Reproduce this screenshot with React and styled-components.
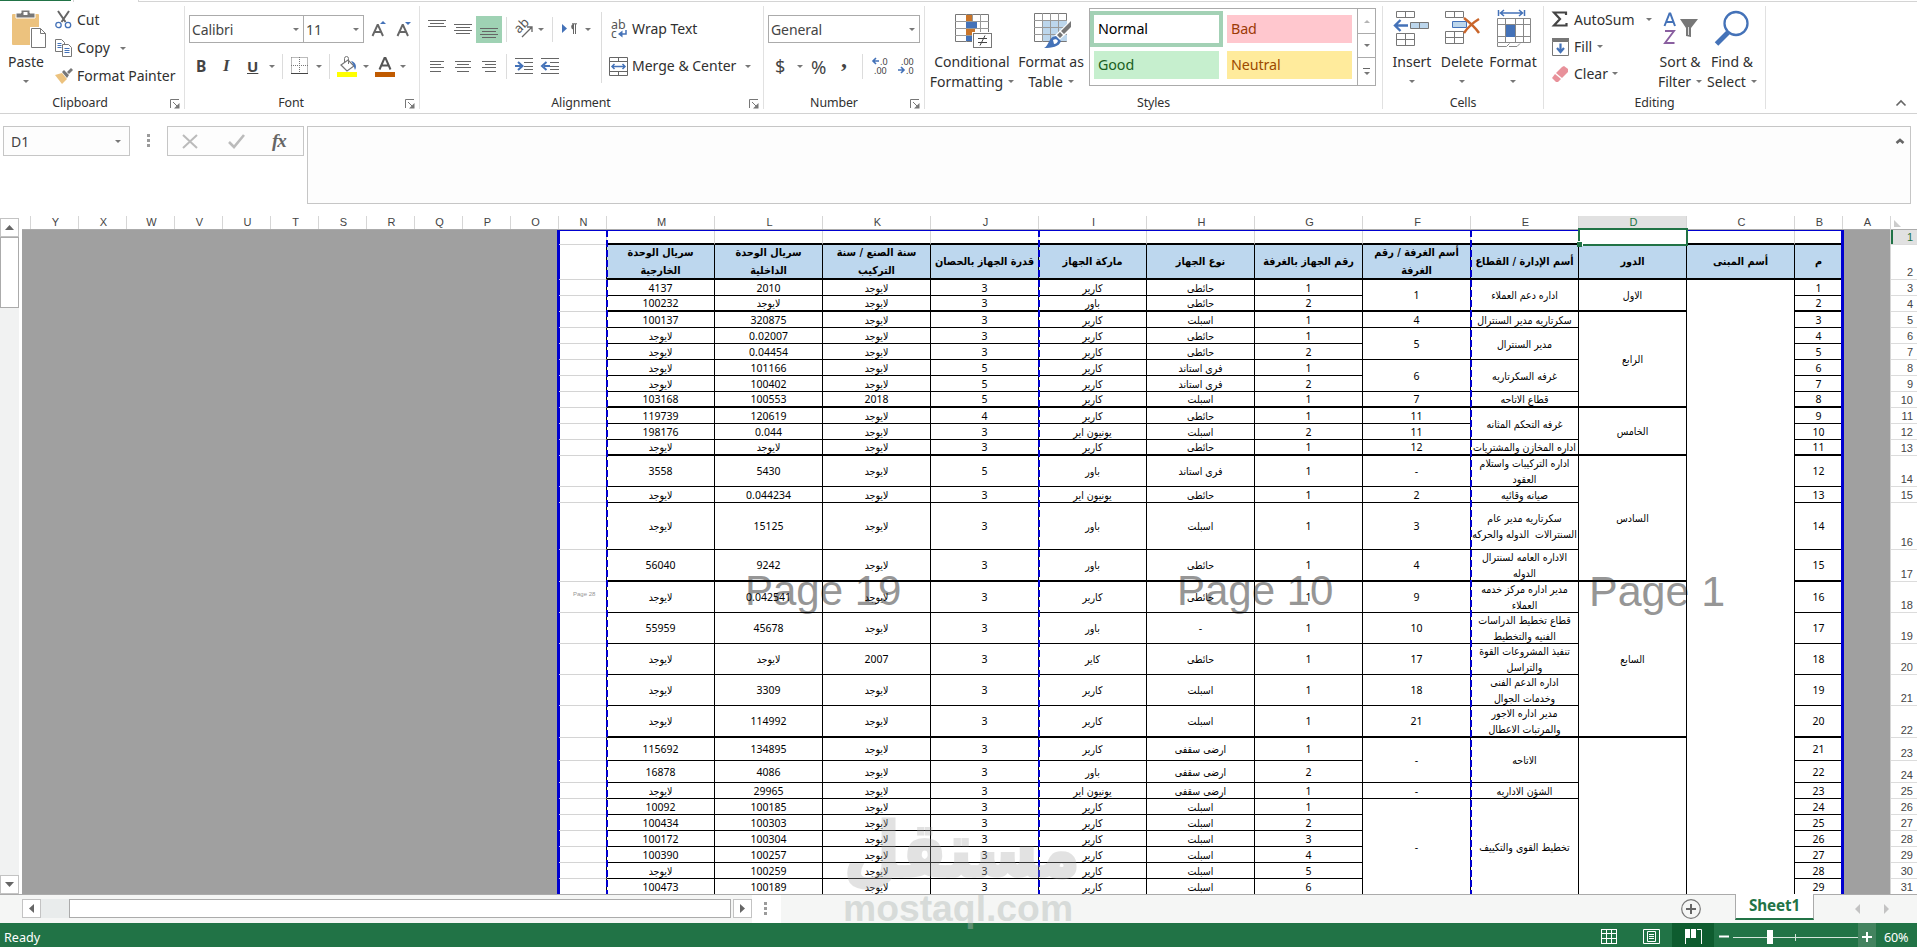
import React from "react";
import styled, { createGlobalStyle, css } from "styled-components";

const GlobalStyle = createGlobalStyle`
  html, body { margin: 0; padding: 0; overflow: hidden; background: #fff; }
  *, *::before, *::after { box-sizing: border-box; }
`;

const UI = `"Noto Sans", "Open Sans", sans-serif`;
const ARABIC = `"DejaVu Sans Condensed", "DejaVu Sans", sans-serif`;
const GREEN = "#217346";
const GRAY = "#777";
const BLUE = "#4472b8";

const Window = styled.div`
  width: 1917px;
  height: 947px;
  display: flex;
  flex-direction: column;
  background: #fff;
  color: #303030;
  font-family: ${UI};
  overflow: hidden;
  & > * { flex: none; }
`;

/* ---------- ribbon ---------- */
const TabEdge = styled.div`
  height: 2px;
  display: flex;
  & > i:nth-child(1) { width: 71px; background: ${GREEN}; height: 1px; }
  & > i:nth-child(2) { width: 3px; border-right: 1px solid #d4d4d4; }
  & > i:nth-child(3) { width: 64px; }
  & > i:nth-child(4) { flex: 1; border-bottom: 1px solid #d4d4d4; border-left: 1px solid #d4d4d4; }
`;
const Ribbon = styled.div`
  height: 112px;
  display: flex;
  border-bottom: 1px solid #d2d2d2;
  padding-top: 4px;
`;
const Group = styled.section`
  width: ${(p) => p.$w}px;
  height: 103px;
  display: flex;
  flex-direction: column;
  border-right: 1px solid #e1e1e1;
`;
const GroupBody = styled.div`
  height: 87px;
  flex: none;
  display: flex;
`;
const GroupFoot = styled.div`
  height: 16px;
  flex: none;
  display: flex;
  justify-content: center;
  position: relative;
  font-size: 12.4px;
  line-height: 20px;
  padding-right: ${(p) => p.$pr || 0}px;
  letter-spacing: -0.1px;
  & > svg { position: absolute; right: 4px; top: 6px; }
`;
const Col = styled.div`
  width: ${(p) => (p.$w ? p.$w + "px" : "auto")};
  flex: none;
  display: flex;
  flex-direction: column;
  margin-left: ${(p) => p.$ml || 0}px;
  padding-top: ${(p) => p.$pt || 0}px;
`;
const Row = styled.div`
  height: ${(p) => p.$h}px;
  display: flex;
  align-items: center;
  flex: none;
  margin-top: ${(p) => p.$mt || 0}px;
`;
const Slot = styled.span`
  width: ${(p) => p.$w}px;
  margin-left: ${(p) => p.$ml || 0}px;
  margin-top: ${(p) => p.$mt || 0}px;
  flex: none;
  display: flex;
  align-items: center;
`;
const Label = styled.span`
  font-size: 14px;
  line-height: 20px;
  margin-left: ${(p) => p.$ml || 0}px;
  white-space: nowrap;
`;
const Caret = styled.i`
  flex: none;
  margin-left: ${(p) => p.$ml || 0}px;
  margin-top: ${(p) => p.$mt || 0}px;
  border: 3.5px solid transparent;
  border-top-color: #777;
  border-bottom: 0;
`;
const VLine = styled.i`
  width: 1px;
  height: ${(p) => p.$h || 25}px;
  margin-left: ${(p) => p.$ml || 0}px;
  margin-top: ${(p) => p.$mt || 0}px;
  background: #dcdcdc;
  flex: none;
`;
const Combo = styled.div`
  width: ${(p) => p.$w}px;
  height: 28px;
  border: 1px solid #ababab;
  border-left-width: ${(p) => (p.$joined ? 0 : 1)}px;
  margin-left: ${(p) => p.$ml || 0}px;
  display: flex;
  align-items: center;
  justify-content: space-between;
  padding: 0 4px 0 2px;
  font-size: 14px;
  color: #444;
  letter-spacing: -0.1px;
`;
const Letter = styled.b`
  font: ${(p) => p.$font};
  color: #444;
  text-decoration: ${(p) => (p.$u ? "underline" : "none")};
`;
const Gallery = styled.div`
  width: 287px;
  height: 78px;
  margin-left: 2px;
  margin-top: 2px;
  border: 1px solid #ababab;
  display: flex;
`;
const Swatches = styled.div`
  display: grid;
  grid-template-columns: 133px 125px;
  grid-template-rows: 36px 28px;
  gap: 4px;
  padding-top: 2px;
  width: 267px;
`;
const Swatch = styled.div`
  height: ${(p) => (p.$sel ? 36 : 28)}px;
  margin: ${(p) => (p.$sel ? "0" : p.$m)};
  border: ${(p) => (p.$sel ? "4px solid #a3d1b5" : "0")};
  background: ${(p) => p.$bg};
  color: ${(p) => p.$c};
  font-size: 14.3px;
  line-height: 27px;
  padding-left: 4px;
  letter-spacing: -0.1px;
`;
const GalleryBar = styled.div`
  flex: 1;
  border-left: 1px solid #ababab;
  display: grid;
  grid-template-rows: 25px 24px 1fr;
  & > span { display: flex; flex-direction: column; align-items: center; justify-content: center; border-bottom: 1px solid #ababab; }
  & > span:last-child { border-bottom: 0; }
`;
const MoreBar = styled.i`
  width: 7px;
  height: 1px;
  background: #666;
  margin-bottom: 3px;
`;
const BigIcon = styled.div`
  height: 45px;
  display: flex;
  align-items: flex-start;
  justify-content: center;
  padding: ${(p) => p.$p || "0"};
`;
const BigText = styled.div`
  height: 20px;
  display: flex;
  align-items: center;
  justify-content: center;
  font-size: 14px;
  white-space: nowrap;
`;
const Collapse = styled.div`
  flex: 1;
  display: flex;
  align-items: flex-end;
  justify-content: flex-end;
  padding: 0 10px 6px 0;
`;

/* ---------- formula bar ---------- */
const FormulaBar = styled.div`
  height: 102px;
  display: flex;
  padding-top: 12px;
  align-items: flex-start;
`;
const NameBox = styled.div`
  width: 127px;
  height: 30px;
  margin-left: 3px;
  border: 1px solid #c6c6c6;
  background: #fdfdfd;
  display: flex;
  align-items: center;
  justify-content: space-between;
  padding: 0 8px 0 7px;
  font-size: 14px;
  color: #444;
`;
const Dots = styled.div`
  display: flex;
  flex-direction: column;
  gap: 2px;
  margin: ${(p) => p.$m};
  & > i { width: 3px; height: 3px; background: #9b9b9b; }
`;
const FxBox = styled.div`
  width: 137px;
  height: 30px;
  border: 1px solid #c6c6c6;
  background: #fdfdfd;
  display: flex;
  align-items: center;
`;
const Fx = styled.span`
  font: italic bold 19px "Liberation Serif", serif;
  color: #666;
  margin-left: 26px;
  letter-spacing: -1px;
  line-height: 26px;
`;
const Input = styled.div`
  width: 1604px;
  height: 78px;
  margin-left: 3px;
  border: 1px solid #c6c6c6;
  background: #fdfdfd;
  display: flex;
  justify-content: flex-end;
  padding: 10px 4px 0 0;
`;

/* ---------- sheet ---------- */
const SheetArea = styled.div`
  height: 678px;
  display: flex;
  position: relative;
`;
const ScrollCol = styled.div`
  width: 22px;
  padding-top: 2px;
  display: flex;
  flex-direction: column;
`;
const ScrollBtn = styled.div`
  width: 19px;
  height: 19px;
  flex: none;
  border: 1px solid #c3c3c3;
  background: #fff;
  display: flex;
  align-items: center;
  justify-content: center;
`;
const VThumb = styled.div`
  width: 19px;
  height: 71px;
  border: 1px solid #ababab;
  background: #fff;
`;
const VTrack = styled.div`
  width: 19px;
  flex: 1;
  background: #f1f2f2;
`;
const Sheet = styled.div`
  width: 1868px;
  display: flex;
  flex-direction: column;
`;
const HeadRow = styled.div`
  height: 14px;
  flex: none;
  display: flex;
  border-bottom: 1px solid #ababab;
  padding-left: 8px;
`;
const Head = styled.div`
  width: ${(p) => p.$w}px;
  border-left: 1px solid #d6d6d6;
  font: 11px "Liberation Sans", sans-serif;
  line-height: 13px;
  color: ${(p) => (p.$on ? GREEN : "#444")};
  background: ${(p) => (p.$on ? "#e1e1e1" : "transparent")};
  text-align: center;
  padding-left: 2px;
`;
const Canvas = styled.div`
  height: 664px;
  flex: none;
  display: flex;
  background: #a0a0a0;
`;
const Page = styled.div`
  width: 1287px;
  margin-left: 535px;
  height: 664px;
  background: #fff;
  border-left: 3px solid #0000d0;
  border-right: 3px solid #0000d0;
  position: relative;
  z-index: 0;
`;
const TopEdge = styled.i`
  position: absolute;
  left: 0;
  right: 0;
  top: 0;
  height: 1px;
  background: #0000d0;
`;
const Cells = styled.div`
  width: 1282px;
  height: 664px;
  overflow: hidden;
  margin-left: -1px;
  display: grid;
  grid-template-columns: 48px repeat(11, 108px) 48px;
  grid-template-rows: ${(p) => p.$rows};
  position: relative;
`;
const Cell = styled.div`
  grid-column: ${(p) => p.$c};
  grid-row: ${(p) => p.$r} / span ${(p) => p.$span || 1};
  border-right: 1px solid ${(p) => (p.$light ? "#d4d4d4" : "#000")};
  border-bottom: ${(p) => (p.$thick ? 2 : 1)}px solid ${(p) => (p.$lightB ? "#d4d4d4" : "#000")};
  display: flex;
  align-items: center;
  justify-content: center;
  text-align: center;
  white-space: pre;
  color: #000;
  font: 10.5px/16px "Noto Sans", sans-serif;
  min-height: 0;
  ${(p) =>
    p.$ar &&
    css`
      direction: rtl;
      font: 10.5px/16px ${ARABIC};
    `}
  ${(p) =>
    p.$hdr &&
    css`
      background: #bdd7ee;
      direction: rtl;
      font: bold 10.8px/18px ${ARABIC};
    `}
`;
const PageMark = styled.div`
  position: absolute;
  left: ${(p) => p.$x}px;
  top: ${(p) => p.$y}px;
  font: ${(p) => p.$s}px/1 "Liberation Sans", sans-serif;
  color: #969696;
  white-space: nowrap;
`;
const PageBreak = styled.i`
  position: absolute;
  left: ${(p) => p.$x}px;
  top: 0;
  width: 2px;
  height: 664px;
  background: repeating-linear-gradient(#0000d0 0 7px, transparent 7px 10px);
`;
const Selection = styled.div`
  position: absolute;
  left: 1018px;
  top: -2px;
  width: 110px;
  height: 18px;
  border: 2px solid ${GREEN};
  background: #fff;
  &::after {
    content: "";
    position: absolute;
    left: -3px;
    bottom: -3px;
    width: 5px;
    height: 5px;
    background: ${GREEN};
    box-shadow: 1px -1px 0 #fff;
  }
`;
const RowHeads = styled.div`
  width: 27px;
  display: flex;
  flex-direction: column;
  border-left: 1px solid #d6d6d6;
  overflow: hidden;
`;
const Corner = styled.div`
  height: 14px;
  padding: 4px 0 0 3px;
  flex: none;
  border-bottom: 1px solid #ababab;
`;
const RowHead = styled.div`
  height: ${(p) => p.$h}px;
  flex: none;
  display: flex;
  justify-content: flex-end;
  align-items: flex-end;
  border-bottom: 1px solid #dcdcdc;
  padding-right: 4px;
  font: 11px/14px "Liberation Sans", sans-serif;
  color: ${(p) => (p.$on ? GREEN : "#444")};
  background: ${(p) => (p.$on ? "#e1e1e1" : "#fff")};
  box-shadow: ${(p) => (p.$on ? "inset 2px 0 0 " + GREEN : "none")};
`;
const BrandMark = styled.div`
  position: absolute;
  left: 843px;
  top: 598px;
  width: 232px;
  height: 116px;
  pointer-events: none;
  white-space: nowrap;
`;
const BrandArabic = styled.b`
  position: absolute;
  left: 1px;
  top: -4px;
  font: bold 75px/80px "DejaVu Sans", sans-serif;
  color: #a8a8a8;
  -webkit-text-stroke: 3px #a8a8a8;
  opacity: 0.32;
  transform: scaleX(0.86);
  transform-origin: 0 0;
`;
const BrandLatin = styled.b`
  position: absolute;
  left: 0;
  top: 74px;
  font: bold 37.3px/40px "Liberation Sans", sans-serif;
  color: #b0b6b3;
  opacity: 0.42;
`;

/* ---------- bottom ---------- */
const TabBar = styled.div`
  height: 29px;
  display: flex;
  background: #f5f6f5;
  border-top: 1px solid #ababab;
  padding-left: 22px;
`;
const HScroll = styled.div`
  display: flex;
  padding-top: 4px;
  width: 730px;
`;
const HTrack = styled.div`
  width: 28px;
  height: 19px;
  background: #e9ecec;
`;
const HThumb = styled.div`
  width: 662px;
  height: 19px;
  border: 1px solid #ababab;
  background: #fff;
  margin-right: 2px;
`;
const Grip = styled.div`
  width: 29px;
  background: #fff;
  display: flex;
`;
const AddSheet = styled.div`
  margin: 4px 0 0 900px;
  height: 20px;
`;
const SheetTab = styled.div`
  width: 79px;
  height: 26px;
  margin: -1px 0 0 34px;
  background: #fff;
  border: 1px solid #ababab;
  border-top: 0;
  border-bottom: 2px solid ${GREEN};
  color: ${GREEN};
  font-weight: 700;
  font-size: 15.2px;
  line-height: 23px;
  text-align: center;
  letter-spacing: -0.1px;
`;
const NavArrow = styled.i`
  margin-top: 9px;
  margin-left: ${(p) => p.$ml}px;
  border: 5px solid transparent;
  ${(p) => (p.$right ? "border-left-color:#c3c3c3;border-right:0;" : "border-right-color:#c3c3c3;border-left:0;")}
  height: 0;
`;
const Status = styled.div`
  height: 24px;
  background: ${GREEN};
  color: #fff;
  display: flex;
  align-items: center;
  font-size: 12.6px;
  padding-left: 4px;
`;
const Ready = styled.span`
  flex: 1;
  padding-top: 5px;
`;
const ViewBtn = styled.span`
  width: 42px;
  height: 24px;
  display: flex;
  align-items: center;
  justify-content: center;
  padding-top: 3px;
  background: ${(p) => (p.$on ? "#0e5c2f" : "transparent")};
`;
const Zoom = styled.span`
  width: 203px;
  height: 24px;
  display: flex;
  align-items: center;
  & > b { font-weight: 400; margin: 5px 0 0 7px; letter-spacing: -0.2px; }
`;

/* ---------- icons ---------- */
const IconSvg = styled.svg`
  display: block;
  flex: none;
  overflow: visible;
`;
const Svg = ({ w, h, children }) => (
  <IconSvg width={w} height={h} viewBox={`0 0 ${w} ${h}`} fill="none">
    {children}
  </IconSvg>
);
const Launcher = () => (
  <Svg w={10} h={10}>
    <path d="M.5 9V.5H9" stroke={GRAY} />
    <path d="M3 3l4 4" stroke={GRAY} />
    <path d="M9.500 4v5.500H4z" fill={GRAY} />
  </Svg>
);
const PasteIcon = () => (
  <Svg w={36} h={39}>
    <rect x="1" y="4" width="27" height="31" rx="1" fill="#ecc27e" />
    <path d="M5 3h5V0h9v3h5v5H5z" fill="#777" stroke="#fff" />
    <rect x="12.500" y="2" width="4" height="3" fill="#fff" />
    <path d="M19 17h11l6 6v16H19z" fill="#fff" />
    <path d="M20.500 18.500h9l5 5v14h-14z M29.500 18.500v5h5" fill="#fff" stroke="#777" />
  </Svg>
);
const CutIcon = () => (
  <Svg w={17} h={18}>
    <path d="M3 0l7.500 11M14 0L6.500 11" stroke="#666" strokeWidth="2" />
    <circle cx="3.500" cy="14" r="2.700" stroke={BLUE} strokeWidth="1.300" />
    <circle cx="13" cy="14" r="2.700" stroke={BLUE} strokeWidth="1.300" />
  </Svg>
);
const CopyIcon = () => (
  <Svg w={18} h={18}>
    <path d="M.5.5h6l3 3v9h-9z" stroke={GRAY} fill="#fff" />
    <path d="M2.500 4.500h4M2.500 6.500h4M2.500 8.500h4" stroke={BLUE} />
    <path d="M7.500 5.500h6l3 3v9h-9z" stroke={GRAY} fill="#fff" />
    <path d="M9.500 9.500h5M9.500 11.500h5M9.500 13.500h5" stroke={BLUE} />
  </Svg>
);
const PainterIcon = () => (
  <Svg w={18} h={17}>
    <path d="M0 7l7-2 5 6-5 5z" fill="#ecc27e" />
    <path d="M7 4l2-2 5 5-2 3zM12 4l4-4 2 2-4 4z" fill="#777" />
  </Svg>
);
const AIcon = ({ down }) => (
  <Svg w={17} h={18}>
    <path d="M1.500 16L6.500 5h.5l5 11M3.500 12h7" stroke="#666" strokeWidth="1.900" />
    <path d={down ? "M9 2h6l-3 3z" : "M9 4h6l-3-3z"} fill={BLUE} />
  </Svg>
);
const BorderIcon = () => (
  <Svg w={18} h={18}>
    <path d="M.5.5h16v15M.5.5v15M8.500 0v16M0 8.500h17" stroke="#777" strokeDasharray="1 1" />
    <path d="M0 16.500h17" stroke="#444" />
  </Svg>
);
const FillIcon = () => (
  <Svg w={20} h={21}>
    <path d="M4 9l7-5 6 6-7 5z" stroke="#777" fill="#fff" strokeWidth="1.200" />
    <path d="M7.500 7V2.500a2 2 0 0 1 4 0V8" stroke="#777" />
    <path d="M14 5c5 1 6 6 4 9-1-3-1-5-4-9z" fill={BLUE} />
    <rect y="16" width="20" height="5" fill="#ff0" />
  </Svg>
);
const FontColorIcon = () => (
  <Svg w={20} h={21}>
    <path d="M4.500 13.500L9.500 2h1l5 11.500M6.500 9.500h7" stroke="#555" strokeWidth="2" />
    <rect y="16" width="20" height="5" fill="#c05a00" />
  </Svg>
);
const Lines = ({ w, h, rows }) => (
  <Svg w={w} h={h}>
    {rows.map(([x, y, l], i) => (
      <path key={i} d={`M${x} ${y + 0.5}h${l}`} stroke="#666" />
    ))}
  </Svg>
);
const HalfSel = styled.span`
  width: 26px;
  height: 27px;
  margin-left: 4px;
  background: #9fd2b4;
  display: flex;
  align-items: flex-end;
  justify-content: center;
  padding-bottom: 5px;
`;
const OrientIcon = () => (
  <Svg w={20} h={18}>
    <text x="0" y="0" transform="translate(5 14) rotate(-45)" fontSize="13" fontFamily="Noto Sans" fill="#555">ab</text>
    <path d="M8 17L18 7M13 7h5v5" stroke="#666" strokeWidth="1.300" />
  </Svg>
);
const RtlIcon = () => (
  <Svg w={16} h={12}>
    <path d="M0 1l5 4.500L0 10z" fill={BLUE} />
    <path d="M15 .8h-5M11.500 1v10M13.500 1v10" stroke="#666" />
    <path d="M11 1a3 3 0 0 0 0 5.500z" fill="#666" />
  </Svg>
);
const WrapIcon = () => (
  <Svg w={18} h={20}>
    <text x="0" y="10" fontSize="12.500" fontFamily="Noto Sans" fill="#555">ab</text>
    <text x="0" y="19" fontSize="12" fontFamily="Noto Sans" fill="#555">c</text>
    <path d="M15 11v4H9" stroke={BLUE} strokeWidth="1.500" />
    <path d="M11.500 11.500L7 15l4.500 3.500z" fill={BLUE} />
  </Svg>
);
const IndentIcon = ({ left }) => (
  <Svg w={19} h={18}>
    <path d="M0 1.500h18M9 5.500h9M9 9.500h9M9 12.500h9M0 16.500h18" stroke="#666" />
    <path d={left ? "M9 9H3M5.500 5L1 9l4.500 4" : "M0 9h6M3 5l4.500 4L3 13"} stroke={BLUE} strokeWidth="2" />
  </Svg>
);
const MergeIcon = () => (
  <Svg w={19} h={19}>
    <path d="M.5.5h18v18H.5zM0 4.500h19M0 14.500h19M9.500 0v4M9.500 15v4" stroke="#666" />
    <path d="M3 9.500h13M5.500 7L3 9.500 5.500 12M13.500 7L16 9.500 13.500 12" stroke={BLUE} strokeWidth="1.500" />
  </Svg>
);
const DecimalIcon = ({ less }) => (
  <Svg w={17} h={20}>
    {less ? (
      <>
        <text x="3" y="8.500" fontSize="9" fontFamily="Noto Sans" fill="#444">.00</text>
        <text x="8" y="17.500" fontSize="9" fontFamily="Noto Sans" fill="#444">.0</text>
        <path d="M0 14h5M3 11l3 3-3 3" stroke={BLUE} strokeWidth="1.600" />
      </>
    ) : (
      <>
        <text x="8" y="8.500" fontSize="9" fontFamily="Noto Sans" fill="#444">.0</text>
        <text x="2" y="17.500" fontSize="9" fontFamily="Noto Sans" fill="#444">.00</text>
        <path d="M7 5H1.500M4 2L1 5l3 3" stroke={BLUE} strokeWidth="1.600" />
      </>
    )}
  </Svg>
);
const CondIcon = () => (
  <Svg w={38} h={35}>
    <path d="M.5.5h33v27H.5z" fill="#fff" stroke="#777" />
    <path d="M0 7.500h34M0 14.500h34M0 21.500h34M11.500 0v28M17.500 0v28M25.500 0v28" stroke="#999" />
    <path d="M11 1h6v6h-6zM11 15h9v6h-9z" fill="#c9752a" />
    <path d="M11 8h11v6H11zM11 22h6v5h-6z" fill={BLUE} />
    <rect x="17" y="18" width="21" height="17" fill="#fff" />
    <rect x="18.500" y="19.500" width="18" height="14" fill="#fff" stroke="#777" />
    <path d="M23 24.500h9M23 28.500h9M30 21.500l-5 10" stroke="#444" />
  </Svg>
);
const TableIcon = () => (
  <Svg w={38} h={36}>
    <path d="M.5.5h32v28H.5z" fill="#fff" stroke="#777" />
    <path d="M9 8h24v20H9z" fill="#bcd6ec" />
    <path d="M0 7.500h33M0 14.500h33M0 21.500h33M8.500 0v29M16.500 0v29M24.500 0v29" stroke="#999" />
    <path d="M38 6v10L24 28l-5-4z" fill="#fff" />
    <path d="M37 8v6l-7 7-3-3zM26 19l3 3-3 3-3-3z" fill="#777" />
    <path d="M22 23l5 5c-2 6-9 7-17 7 5-2 5-12 12-12z" fill={BLUE} />
    <path d="M19 27c2-1 4-1 5 1-1 2-2 3-4 3z" fill="#fff" />
  </Svg>
);
const InsertIcon = () => (
  <Svg w={38} h={36}>
    <path d="M3.500.5h18v6h-18zM12.500 0v7M3.500 22.500h18v12h-18zM12.500 22v13M3 28.500h19" stroke="#777" />
    <path d="M17.500 11.500h18v6h-18z" fill="#bcd6ec" stroke="#777" />
    <path d="M26.500 11v7" stroke="#777" />
    <path d="M15 14.500H2M7.500 9l-5.500 5.500L7.500 20" stroke={BLUE} strokeWidth="2.400" />
  </Svg>
);
const DeleteIcon = () => (
  <Svg w={38} h={36}>
    <path d="M.5.5h18v6H.5zM9.500 0v7M.5 20.500h18v12H.5zM9.500 20v13M0 26.500h19" stroke="#777" />
    <path d="M7.500 10.500h14v6h-14z" fill="#bcd6ec" stroke="#4472b8" />
    <path d="M19 7c5 4 11 9 15 15M34 8c-5 3-11 8-15 14" stroke="#c9652a" strokeWidth="2.400" />
  </Svg>
);
const FormatIcon = () => (
  <Svg w={36} h={38}>
    <path d="M1.500 0v6M27.500 0v6M3 3h23M7 0L3.500 3 7 6M22 0l3.500 3L22 6" stroke={BLUE} strokeWidth="1.500" />
    <path d="M.5 8.500h33v24H.5zM0 14.500h34M0 26.500h34M8.500 8v25M18.500 8v25M26.500 8v25" stroke="#888" />
    <rect x="9" y="15" width="9" height="12" fill={BLUE} />
    <path d="M.5 33v3.500h9l3-3M12 36.500h8l3-3" stroke="#888" />
  </Svg>
);
const SigmaIcon = () => (
  <Svg w={16} h={17}>
    <path d="M14 4V1.500H2L8 8l-6 6.500h12.500V12" stroke="#444" strokeWidth="2.200" />
  </Svg>
);
const FillDownIcon = () => (
  <Svg w={17} h={18}>
    <path d="M.5 3.500h16v14H.5z" fill="#fff" stroke="#777" />
    <path d="M0 0h17v3.500H0z" fill="#777" />
    <path d="M8.500 5.500v8M5 10l3.500 4 3.500-4" stroke={BLUE} strokeWidth="2.200" />
  </Svg>
);
const EraserIcon = () => (
  <Svg w={17} h={16}>
    <path d="M10 1l2-1 4 3v3l-6 6-6-5z" fill="#e8919a" />
    <path d="M3 8l6 5-3 3H4l-4-4z" fill="#e8919a" />
  </Svg>
);
const SortIcon = () => (
  <Svg w={36} h={34}>
    <path d="M1.500 14L6.500 1.500h.8L12 14M3 10h8" stroke={BLUE} strokeWidth="2" />
    <path d="M2 19h9L2 31h9.500" stroke="#8a5fa0" strokeWidth="1.900" />
    <path d="M17 7h18l-7 9v9l-5-1v-8z" fill="#777" />
    <path d="M25.500 15v8" stroke="#ddd" />
  </Svg>
);
const FindIcon = () => (
  <Svg w={36} h={36}>
    <circle cx="22" cy="12.500" r="11.500" stroke={BLUE} strokeWidth="2.300" />
    <path d="M14 21.500L2.500 33" stroke={BLUE} strokeWidth="5" />
  </Svg>
);
const Chevron = ({ s = 1.6, small }) => (
  <Svg w={12} h={8}>
    <path d={small ? "M2.500 6L6 3l3.500 3" : "M1.500 6.500L6 2l4.500 4.500"} stroke="#666" strokeWidth={s} />
  </Svg>
);
const Tri = ({ d, w = 10, h = 10, c = "#666" }) => (
  <Svg w={w} h={h}>
    <path d={d} fill={c} />
  </Svg>
);

/* ---------- data ---------- */
const NO = "لايوجد";
const CR = "كارير", PW = "باور", UN = "يونيون اير";
const WALL = "حائطى", SPL = "اسبلت", FREE = "فرى استاند", FLOOR = "ارضى سقفى";
const heights = [15, 35, 16, 16, 16, 16, 16, 16, 16, 16, 16, 16, 16, 31, 16, 47, 32, 31, 31, 31, 31, 32, 23, 22, 16, 16, 16, 16, 16, 16, 16];
const thick = new Set([1, 2, 4, 10, 13, 17, 22]);
const headers = [
  "سريال الوحدة\nالخارجية", "سريال الوحدة\nالداخلية", "سنة الصنع / سنة\nالتركيب", "قدرة الجهاز بالحصان",
  "ماركة الجهاز", "نوع الجهاز", "رقم الجهاز بالغرفة", "أسم الغرفة / رقم\nالغرفة", "أسم الإدارة / القطاع", "الدور", "أسم المبنى", "م",
];
const data = [
  ["4137", "2010", NO, "3", CR, WALL, "1"],
  ["100232", NO, NO, "3", PW, WALL, "2"],
  ["100137", "320875", NO, "3", CR, SPL, "1"],
  [NO, "0.02007", NO, "3", CR, WALL, "1"],
  [NO, "0.04454", NO, "3", CR, WALL, "2"],
  [NO, "101166", NO, "5", CR, FREE, "1"],
  [NO, "100402", NO, "5", CR, FREE, "2"],
  ["103168", "100553", "2018", "5", CR, SPL, "1"],
  ["119739", "120619", NO, "4", CR, WALL, "1"],
  ["198176", "0.044", NO, "3", UN, SPL, "2"],
  [NO, NO, NO, "3", CR, WALL, "1"],
  ["3558", "5430", NO, "5", PW, FREE, "1"],
  [NO, "0.044234", NO, "3", UN, WALL, "1"],
  [NO, "15125", NO, "3", PW, SPL, "1"],
  ["56040", "9242", NO, "3", PW, WALL, "1"],
  [NO, "0.042541", NO, "3", CR, WALL, "1"],
  ["55959", "45678", NO, "3", PW, "-", "1"],
  [NO, NO, "2007", "3", "كاير", WALL, "1"],
  [NO, "3309", NO, "3", CR, SPL, "1"],
  [NO, "114992", NO, "3", CR, SPL, "1"],
  ["115692", "134895", NO, "3", CR, FLOOR, "1"],
  ["16878", "4086", NO, "3", PW, FLOOR, "2"],
  [NO, "29965", NO, "3", UN, FLOOR, "1"],
  ["10092", "100185", NO, "3", CR, SPL, "1"],
  ["100434", "100303", NO, "3", CR, SPL, "2"],
  ["100172", "100304", NO, "3", CR, SPL, "3"],
  ["100390", "100257", NO, "3", CR, SPL, "4"],
  [NO, "100259", NO, "3", CR, SPL, "5"],
  ["100473", "100189", NO, "3", CR, SPL, "6"],
];
/* [first row, row span, text] */
const rooms = [
  [3, 2, "1"], [5, 1, "4"], [6, 2, "5"], [8, 2, "6"], [10, 1, "7"], [11, 1, "11"], [12, 1, "11"], [13, 1, "12"],
  [14, 1, "-"], [15, 1, "2"], [16, 1, "3"], [17, 1, "4"], [18, 1, "9"], [19, 1, "10"], [20, 1, "17"], [21, 1, "18"],
  [22, 1, "21"], [23, 2, "-"], [25, 1, "-"], [26, 6, "-"],
];
const sectors = [
  [3, 2, "اداره دعم العملاء"], [5, 1, "سكرتاريه مدير السنترال"], [6, 2, "مدير السنترال"], [8, 2, "غرفه السكرتاريه"],
  [10, 1, "قطاع الاتاحه"], [11, 2, "غرفه التحكم المثانه"], [13, 1, "اداره المخازن والمشتريات"],
  [14, 1, "اداره التركيبات واستلام\nالعقود"], [15, 1, "صيانه وقائيه"], [16, 1, "سكرتاريه مدير عام\nالسنترالات  الدوله والحركه"],
  [17, 1, "الاداره العامه لسنترال\nالدوله"], [18, 1, "مدير اداره مركز خدمه\nالعملاء"], [19, 1, "قطاع تخطيط الدراسات\nالفنيه والتخطيط"],
  [20, 1, "تنفيذ المشروعات القوة\nوالتراسل"], [21, 1, "اداره الدعم الفنى\nوخدمات الجوال"], [22, 1, "مدير اداره الاجور\nوالمرتبات الاعطال"],
  [23, 2, "الاتاحه"], [25, 1, "الشؤن الاداريه"], [26, 6, "تخطيط القوى والتكييف"],
];
const floors = [
  [3, 2, "الاول"], [5, 6, "الرابع"], [11, 3, "الخامس"], [14, 4, "السادس"], [18, 5, "السابع"], [23, 9, ""],
];
const isAr = (t) => /[\u0600-\u06ff]/.test(t);

const merged = (list, col) =>
  list.map(([r, span, text]) => (
    <Cell key={`${col}-${r}`} $c={col} $r={r} $span={span} $thick={thick.has(r + span - 1)} $ar={isAr(text)}>
      {text}
    </Cell>
  ));

function Grid() {
  return (
    <Cells $rows={heights.map((h) => h + "px").join(" ")}>
      {heights.map((_, i) => (
        <Cell key={"n" + i} $c={1} $r={i + 1} $lightB $light={i === 0} />
      ))}
      {headers.map((_, i) => (
        <Cell key={"t" + i} $c={i + 2} $r={1} $light $thick />
      ))}
      {headers.map((h, i) => (
        <Cell key={"h" + i} $c={i + 2} $r={2} $thick $hdr>{h}</Cell>
      ))}
      {data.map((row, r) =>
        row.map((t, c) => (
          <Cell key={`${r}-${c}`} $c={c + 2} $r={r + 3} $thick={thick.has(r + 3)} $ar={isAr(t)}>{t}</Cell>
        ))
      )}
      {merged(rooms, 9)}
      {merged(sectors, 10)}
      {merged(floors, 11)}
      {merged([[3, 29, ""]], 12)}
      {data.map((_, r) => (
        <Cell key={"b" + r} $c={13} $r={r + 3} $thick={thick.has(r + 3)}>{r + 1}</Cell>
      ))}
    </Cells>
  );
}

const narrow = "YXWVUTSRQPON".split("");
const wide = "MLKJIHGFEDC".split("");

const Big = ({ w, ml, pad, icon, lines }) => (
  <Col $w={w} $ml={ml}>
    <BigIcon $p={pad}>{icon}</BigIcon>
    <BigText>{lines[0]}</BigText>
    <BigText>
      {lines[1]}
      <Caret $ml={lines[1] ? 5 : 0} $mt={0} />
    </BigText>
  </Col>
);

function RibbonBar() {
  return (
    <Ribbon>
      <Group $w={185}>
        <GroupBody>
          <Col $w={52}>
            <BigIcon $p="4px 0 0 6px"><PasteIcon /></BigIcon>
            <BigText>Paste</BigText>
            <BigText><Caret /></BigText>
          </Col>
          <Col $ml={3}>
            <Row $h={28}><Slot $w={22}><CutIcon /></Slot><Label>Cut</Label></Row>
            <Row $h={28}><Slot $w={22}><CopyIcon /></Slot><Label>Copy</Label><Caret $ml={10} /></Row>
            <Row $h={28}><Slot $w={22}><PainterIcon /></Slot><Label>Format Painter</Label></Row>
          </Col>
        </GroupBody>
        <GroupFoot $pr={24}>Clipboard<Launcher /></GroupFoot>
      </Group>

      <Group $w={235}>
        <GroupBody>
          <Col>
            <Row $h={28} $mt={9}>
              <Combo $w={115} $ml={4}>Calibri<Caret /></Combo>
              <Combo $w={60} $joined>11<Caret /></Combo>
              <Slot $w={17} $ml={7}><AIcon /></Slot>
              <Slot $w={17} $ml={8}><AIcon down /></Slot>
            </Row>
            <Row $h={26} $mt={10}>
              <Slot $w={22} $ml={11}><Letter $font={`bold 15.5px ${UI}`}>B</Letter></Slot>
              <Slot $w={24} $ml={5}><Letter $font={`italic bold 17px "Liberation Serif"`}>I</Letter></Slot>
              <Slot $w={20}><Letter $font={`bold 15px ${UI}`} $u>U</Letter></Slot>
              <Caret $ml={2} />
              <VLine $ml={7} />
              <Slot $w={18} $ml={8}><BorderIcon /></Slot>
              <Caret $ml={7} />
              <VLine $ml={7} />
              <Slot $w={20} $ml={7}><FillIcon /></Slot>
              <Caret $ml={6} />
              <Slot $w={20} $ml={6}><FontColorIcon /></Slot>
              <Caret $ml={5} />
            </Row>
          </Col>
        </GroupBody>
        <GroupFoot $pr={22}>Font<Launcher /></GroupFoot>
      </Group>

      <Group $w={344}>
        <GroupBody>
          <Col $w={180}>
            <Row $h={28} $mt={9}>
              <Slot $w={18} $ml={8} $mt={-10}><Lines w={18} h={8} rows={[[0, 0, 18], [2, 3, 14], [0, 6, 18]]} /></Slot>
              <Slot $w={18} $ml={8}><Lines w={18} h={10} rows={[[0, 0, 18], [2, 3, 14], [0, 6, 18], [2, 9, 14]]} /></Slot>
              <HalfSel><Lines w={18} h={10} rows={[[0, 0, 18], [2, 3, 14], [0, 6, 18], [2, 9, 14]]} /></HalfSel>
              <VLine $ml={4} />
              <Slot $w={20} $ml={7}><OrientIcon /></Slot>
              <Caret $ml={4} />
              <VLine $ml={8} />
              <Slot $w={16} $ml={9}><RtlIcon /></Slot>
              <Caret $ml={7} />
            </Row>
            <Row $h={26} $mt={10}>
              <Slot $w={16} $ml={10}><Lines w={16} h={11} rows={[[0, 0, 14], [0, 3, 11], [0, 6, 14], [0, 10, 11]]} /></Slot>
              <Slot $w={16} $ml={9}><Lines w={16} h={11} rows={[[0, 0, 16], [2, 3, 12], [0, 6, 16], [2, 10, 12]]} /></Slot>
              <Slot $w={14} $ml={11}><Lines w={14} h={11} rows={[[0, 0, 14], [3, 3, 11], [0, 6, 14], [3, 10, 11]]} /></Slot>
              <VLine $ml={10} />
              <Slot $w={19} $ml={8}><IndentIcon /></Slot>
              <Slot $w={19} $ml={7}><IndentIcon left /></Slot>
            </Row>
          </Col>
          <VLine $ml={1} $h={71} $mt={6} />
          <Col>
            <Row $h={28} $mt={9}><Slot $w={20} $ml={9}><WrapIcon /></Slot><Label $ml={1}>Wrap Text</Label></Row>
            <Row $h={26} $mt={10}><Slot $w={19} $ml={7}><MergeIcon /></Slot><Label $ml={4}>Merge &amp; Center</Label><Caret $ml={9} /></Row>
          </Col>
        </GroupBody>
        <GroupFoot $pr={21}>Alignment<Launcher /></GroupFoot>
      </Group>

      <Group $w={161}>
        <GroupBody>
          <Col>
            <Row $h={28} $mt={9}><Combo $w={152} $ml={4}>General<Caret /></Combo></Row>
            <Row $h={26} $mt={10}>
              <Slot $w={14} $ml={11}><Letter $font={`18px ${UI}`}>$</Letter></Slot>
              <Caret $ml={8} />
              <Slot $w={20} $ml={8}><Letter $font={`18.5px ${UI}`}>%</Letter></Slot>
              <Slot $w={10} $ml={10} $mt={-14}><Letter $font={`bold 24px "Liberation Serif"`}>,</Letter></Slot>
              <VLine $ml={11} />
              <Slot $w={17} $ml={9}><DecimalIcon /></Slot>
              <Slot $w={17} $ml={9}><DecimalIcon less /></Slot>
            </Row>
          </Col>
        </GroupBody>
        <GroupFoot $pr={20}>Number<Launcher /></GroupFoot>
      </Group>

      <Group $w={458}>
        <GroupBody>
          <Big w={84} ml={5} pad="8px 0 0 4px" icon={<CondIcon />} lines={["Conditional", "Formatting"]} />
          <Big w={72} ml={1} pad="7px 0 0 4px" icon={<TableIcon />} lines={["Format as", "Table"]} />
          <Gallery>
            <Swatches>
              <Swatch $sel $bg="#fff" $c="#000">Normal</Swatch>
              <Swatch $m="4px 0" $bg="#ffc7ce" $c="#9c3a06">Bad</Swatch>
              <Swatch $m="0 4px" $bg="#c6efce" $c="#1a6123">Good</Swatch>
              <Swatch $m="0" $bg="#ffeb9c" $c="#9c4a00">Neutral</Swatch>
            </Swatches>
            <GalleryBar>
              <span><Tri w={6} h={3} d="M0 3h6L3 0z" c="#b5b5b5" /></span>
              <span><Caret /></span>
              <span><MoreBar /><Caret /></span>
            </GalleryBar>
          </Gallery>
        </GroupBody>
        <GroupFoot>Styles</GroupFoot>
      </Group>

      <Group $w={161}>
        <GroupBody>
          <Big w={50} ml={4} pad="5px 0 0" icon={<InsertIcon />} lines={["Insert", ""]} />
          <Big w={50} ml={0} pad="5px 0 0 4px" icon={<DeleteIcon />} lines={["Delete", ""]} />
          <Big w={50} ml={1} pad="4px 0 0 4px" icon={<FormatIcon />} lines={["Format", ""]} />
        </GroupBody>
        <GroupFoot>Cells</GroupFoot>
      </Group>

      <Group $w={222}>
        <GroupBody>
          <Col $w={108}>
            <Row $h={27}><Slot $w={22} $ml={8}><SigmaIcon /></Slot><Label>AutoSum</Label><Caret $ml={11} /></Row>
            <Row $h={27}><Slot $w={22} $ml={8}><FillDownIcon /></Slot><Label>Fill</Label><Caret $ml={5} /></Row>
            <Row $h={27}><Slot $w={22} $ml={8}><EraserIcon /></Slot><Label>Clear</Label><Caret $ml={4} /></Row>
          </Col>
          <Big w={48} ml={4} pad="6px 0 0 2px" icon={<SortIcon />} lines={["Sort &", "Filter"]} />
          <Big w={54} ml={1} pad="5px 0 0" icon={<FindIcon />} lines={["Find &", "Select"]} />
        </GroupBody>
        <GroupFoot>Editing</GroupFoot>
      </Group>
      <Collapse><Chevron /></Collapse>
    </Ribbon>
  );
}

export default function App() {
  return (
    <Window>
      <GlobalStyle />
      <TabEdge><i /><i /><i /><i /></TabEdge>
      <RibbonBar />

      <FormulaBar>
        <NameBox>D1<Caret /></NameBox>
        <Dots $m="8px 17px 0"><i /><i /><i /></Dots>
        <FxBox>
          <Svg w={60} h={20}>
            <path d="M15 4l14 13M29 4L15 17" stroke="#bbb" strokeWidth="2" />
          </Svg>
          <Svg w={18} h={16}>
            <path d="M1 9l5 5L16 2" stroke="#bbb" strokeWidth="2.600" />
          </Svg>
          <Fx>fx</Fx>
        </FxBox>
        <Input><Chevron s={2.6} small /></Input>
      </FormulaBar>

      <SheetArea>
        <ScrollCol>
          <ScrollBtn><Tri w={9} h={5} d="M0 5h9L4.500 0z" /></ScrollBtn>
          <VThumb />
          <VTrack />
          <ScrollBtn><Tri w={9} h={5} d="M0 0h9L4.500 5z" /></ScrollBtn>
        </ScrollCol>
        <Sheet>
          <HeadRow>
            {narrow.map((l) => <Head key={l} $w={48}>{l}</Head>)}
            {wide.map((l) => <Head key={l} $w={108} $on={l === "D"}>{l}</Head>)}
            <Head $w={48}>B</Head>
            <Head $w={48}>A</Head>
          </HeadRow>
          <Canvas>
            <Page>
              <PageMark $x={13} $y={361} $s={6}>Page 28</PageMark>
              <PageMark $x={185} $y={340} $s={42}>Page 19</PageMark>
              <PageMark $x={617} $y={340} $s={42}>Page 10</PageMark>
              <PageMark $x={1029} $y={340} $s={43}>Page 1</PageMark>
              <Grid />
              <TopEdge />
              <PageBreak $x={46} />
              <PageBreak $x={478} />
              <PageBreak $x={910} />
              <Selection />
            </Page>
          </Canvas>
        </Sheet>
        <RowHeads>
          <Corner><Tri w={7} h={7} d="M0 0v7h7z" c="#ccc" /></Corner>
          {heights.map((h, i) => <RowHead key={i} $h={h} $on={i === 0}>{i + 1}</RowHead>)}
        </RowHeads>
        <BrandMark>
          <BrandArabic>مستقل</BrandArabic>
          <BrandLatin>mostaql.com</BrandLatin>
        </BrandMark>
      </SheetArea>

      <TabBar>
        <HScroll>
          <ScrollBtn><Tri w={5} h={9} d="M5 0v9L0 4.500z" /></ScrollBtn>
          <HTrack />
          <HThumb />
          <ScrollBtn><Tri w={5} h={9} d="M0 0v9l5-4.500z" /></ScrollBtn>
        </HScroll>
        <Grip><Dots $m="7px 0 0 12px"><i /><i /><i /></Dots></Grip>
        <AddSheet>
          <Svg w={20} h={20}>
            <circle cx="10" cy="10" r="9.300" stroke="#777" strokeWidth="1.200" />
            <path d="M5 10h10M10 5v10" stroke="#666" strokeWidth="2" />
          </Svg>
        </AddSheet>
        <SheetTab>Sheet1</SheetTab>
        <NavArrow $ml={41} />
        <NavArrow $ml={24} $right />
      </TabBar>

      <Status>
        <Ready>Ready</Ready>
        <ViewBtn>
          <Svg w={16} h={15}><path d="M.5 0v15M5.500 0v15M10.500 0v15M15.500 0v15M0 .5h16M0 4.500h16M0 9.500h16M0 14.500h16" stroke="#fff" /></Svg>
        </ViewBtn>
        <ViewBtn>
          <Svg w={17} h={15}><path d="M.5.5h16v14H.5zM4.500 2.500h8v10h-8zM6 5.500h5M6 7.500h5M6 9.500h5" stroke="#fff" /></Svg>
        </ViewBtn>
        <ViewBtn $on>
          <Svg w={17} h={15}><path d="M0 0h5v9H0zM6 0h5v9H6z" fill="#fff" /><path d="M.5 8v7M16.500 15V.5H12" stroke="#fff" /></Svg>
        </ViewBtn>
        <Zoom>
          <Svg w={163} h={24}>
            <rect x="144" width="18" height="24" fill="#43835f" />
            <path d="M5 13.500h10" stroke="#fff" strokeWidth="2" />
            <path d="M19 14.500h125M81.500 11v7" stroke="#d5e5dc" />
            <rect x="53" y="7" width="6" height="14" fill="#fff" />
            <path d="M148 14h10M153 9v10" stroke="#fff" strokeWidth="2" />
          </Svg>
          <b>60%</b>
        </Zoom>
      </Status>
    </Window>
  );
}
